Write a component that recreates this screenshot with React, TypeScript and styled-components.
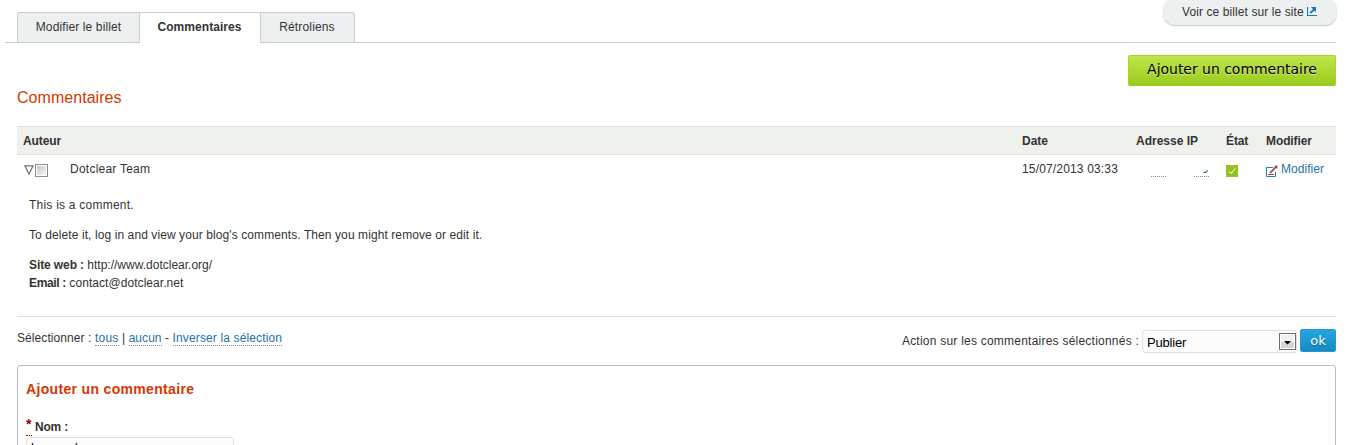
import React from "react";
import styled, { createGlobalStyle } from "styled-components";

const Global = createGlobalStyle`
  html, body { margin: 0; height: 445px; overflow: hidden; background: #fff; }
  * { box-sizing: border-box; }
  body { font: 12px/18px "Liberation Sans", Arial, sans-serif; color: #333; }
`;

const Page = styled.div`
  width: 1347px;
  height: 445px;
  padding: 0 11px 0 5px;
  overflow: hidden;
`;
const T = styled.span<{ $ls?: number }>`
  letter-spacing: ${(p) => p.$ls ?? 0}px;
  white-space: nowrap;
`;
const TopBar = styled.header`
  height: 43px;
  padding-left: 12px;
  display: flex;
  justify-content: space-between;
  border-bottom: 1px solid #ccc;
`;
const Tabs = styled.nav`
  display: flex;
  margin-top: 12px;
`;
const Tab = styled.a<{ $active?: boolean; $w: number }>`
  width: ${(p) => p.$w}px;
  height: ${(p) => (p.$active ? 31 : 30)}px;
  padding: 5px 1px 0 0;
  text-align: center;
  border: 1px solid #ccc;
  border-bottom: 0;
  margin-right: -1px;
  background: ${(p) => (p.$active ? "#fff" : "#ecf0f1")};
  font-weight: ${(p) => (p.$active ? "bold" : "normal")};
  &:first-child { border-top-left-radius: 3px; padding-right: 0; }
  &:last-child { border-top-right-radius: 3px; }
`;
const ViewLink = styled.a`
  width: 174px;
  height: 27px;
  margin: -2px -1px 0 0;
  padding: 5px 0 0 19px;
  display: flex;
  gap: 3px;
  border-radius: 12px;
  background: #ecf0f1;
  box-shadow: 0 1px 1px #c8c8c8;
  svg { margin-top: 4px; }
`;
const Content = styled.main`
  padding-left: 12px;
`;
const AddRow = styled.div`
  display: flex;
  justify-content: flex-end;
  padding-top: 12px;
`;
const AddButton = styled.button`
  width: 208px;
  height: 31px;
  padding: 0 0 4px;
  border: 1px solid #a5d52c;
  border-bottom-color: #9bca1c;
  border-radius: 2px;
  background: linear-gradient(#bee74b, #9bca1c);
  font: 14px/18px "DejaVu Sans", sans-serif;
  color: #000;
  text-shadow: 0 1px 1px rgba(255, 255, 255, 0.6);
`;
const Title = styled.h3`
  margin: 1px 0 17px;
  height: 22px;
  font: 16px/22px "Liberation Sans", Arial, sans-serif;
  color: #d33800;
`;
const Row = styled.div<{ $head?: boolean }>`
  display: grid;
  grid-template-columns: 999px 114px 90px 40px 1fr;
  height: 29px;
  padding: 5px 0 0 6px;
  ${(p) => p.$head && "background: #eff1ec; border: solid #dfdfdf; border-width: 1px 0; font-weight: bold;"}
`;
const Cell = styled.div`
  display: flex;
`;
const Author = styled(Cell)`
  svg { margin: 5px 1px 0 1px; }
`;
const Check = styled.span`
  width: 13px;
  height: 13px;
  margin: 4px 22px 0 0;
  border: 1px solid #8e8f8f;
  background: linear-gradient(135deg, #c4c8ce, #f6f6f6) content-box;
  padding: 1px;
`;
const Masked = styled.div`
  display: flex;
  padding-left: 15px;
  height: 18px;
`;
const Dots = styled.i`
  width: 15px;
  height: 17px;
  margin-right: 28px;
  border-bottom: 1px dotted #888;
`;
const DotsEnd = styled(Dots)`
  display: flex;
  justify-content: flex-end;
  margin: 0;
  svg { margin-top: 5px; }
`;
const State = styled(Cell)`
  svg { margin-top: 5px; }
`;
const Edit = styled(Cell)`
  gap: 3px;
  color: #2373a8;
  svg { margin-top: 5px; }
`;
const Detail = styled.section`
  height: 133px;
  padding: 12px 0 0 12px;
  border-bottom: 1px solid #dfdfdf;
  p { margin: 0 0 12px; }
`;
const Actions = styled.div`
  display: flex;
  justify-content: space-between;
  height: 48px;
  padding-top: 12px;
`;
const Link = styled.a<{ $ls?: number }>`
  display: inline-block;
  height: 17px;
  letter-spacing: ${(p) => p.$ls ?? 0.1}px;
  color: #2373a8;
  border-bottom: 1px dotted #888;
`;
const Apply = styled.div`
  display: flex;
  > span { margin: 3px 3px 0 0; }
`;
const Select = styled.div`
  width: 155px;
  height: 23px;
  margin: 1px 3px 0 0;
  display: flex;
  justify-content: space-between;
  padding: 2px 0 0 4px;
  border: 1px solid #dfdfdf;
  border-radius: 3px;
  background: #fcfcfc;
  color: #000;
  font-size: 13px;
  line-height: 19px;
`;
const Ok = styled.button`
  width: 36px;
  height: 23px;
  padding: 0;
  border: 1px solid #1f9bd8;
  border-radius: 2px;
  background: linear-gradient(#25a6e1, #188bc0);
  color: #fff;
  font: 13px/18px "DejaVu Sans", sans-serif;
  text-shadow: 0 1px 1px #14638a;
`;
const Fieldset = styled.section`
  height: 90px;
  padding: 14px 8px 0;
  border: 1px solid #bbb;
  border-radius: 3px;
`;
const Legend = styled.h4`
  margin: 0 0 20px;
  font-size: 14px;
  line-height: 18px;
  color: #d33800;
`;
const Label = styled.div`
  display: flex;
  gap: 3px;
  height: 19px;
  font-weight: bold;
`;
const Required = styled.abbr`
  width: 6px;
  height: 18px;
  border-bottom: 1px dotted #900;
  color: #900;
  font-size: 14px;
  line-height: 13px;
`;
const Input = styled.div`
  width: 208px;
  height: 24px;
  padding: 1px 4px;
  border: 1px solid #dfdfdf;
  border-radius: 3px;
  background: #fcfcfc;
  color: #000;
  font-size: 13px;
  line-height: 18px;
`;

export default function App() {
  return (
    <>
      <Global />
      <Page>
        <TopBar>
          <Tabs>
            <Tab $w={123}><T $ls={0.12}>Modifier le billet</T></Tab>
            <Tab $w={122} $active><T $ls={0.05}>Commentaires</T></Tab>
            <Tab $w={95}><T $ls={0.15}>Rétroliens</T></Tab>
          </Tabs>
          <ViewLink>
            <T $ls={0.09}>Voir ce billet sur le site</T>
            <svg width="10" height="10" fill="none" stroke="#1c78a6">
              <path d="M.5 0V8.5H10" strokeWidth="1.2" />
              <path d="M3.3 6.2L7.5 2" strokeWidth="1.8" />
              <path d="M4 0H9V5.2z" fill="#1c78a6" stroke="none" />
            </svg>
          </ViewLink>
        </TopBar>
        <Content>
          <AddRow><AddButton><T $ls={-0.03}>Ajouter un commentaire</T></AddButton></AddRow>
          <Title><T $ls={0.04}>Commentaires</T></Title>
          <Row $head>
            <Cell><T $ls={-0.1}>Auteur</T></Cell>
            <Cell><T>Date</T></Cell>
            <Cell><T>Adresse IP</T></Cell>
            <Cell><T $ls={-0.1}>État</T></Cell>
            <Cell><T $ls={-0.1}>Modifier</T></Cell>
          </Row>
          <Row>
            <Author>
              <svg width="10" height="10" fill="none" stroke="#777" strokeWidth="1.3"><path d="M.9 .8H9.1L5 9z" /></svg>
              <Check />
              <T $ls={0.24}>Dotclear Team</T>
            </Author>
            <Cell><T $ls={0.16}>15/07/2013 03:33</T></Cell>
            <Masked>
              <Dots />
              <DotsEnd>
                <svg width="6" height="9" fill="none" stroke="#2373a8" strokeWidth="1.2"><path d="M.5 7.4H3L4.6 5.4" /></svg>
              </DotsEnd>
            </Masked>
            <State>
              <svg width="12" height="12">
                <rect width="12" height="12" fill="#95c11f" />
                <path d="M3 6.2L5.2 8.6L9.2 3.4" fill="none" stroke="#fff" />
              </svg>
            </State>
            <Edit>
              <svg width="12" height="12" fill="none">
                <path d="M7 2.5H.5V11.5H9.5V7" stroke="#2080b0" />
                <path d="M2 9.5H8" stroke="#c33" />
                <path d="M4 8L9 3" stroke="#777" strokeWidth="2" />
                <path d="M9 3L11 1" stroke="#c9304c" strokeWidth="2.5" />
              </svg>
              <T $ls={0.05}>Modifier</T>
            </Edit>
          </Row>
          <Detail>
            <p><T $ls={0.23}>This is a comment.</T></p>
            <p><T $ls={0.09}>To delete it, log in and view your blog's comments. Then you might remove or edit it.</T></p>
            <div><T $ls={-0.1}><b>Site web :</b></T><T> http://www.dotclear.org/</T></div>
            <div><T $ls={-0.34}><b>Email :</b></T><T $ls={0.06}> contact@dotclear.net</T></div>
          </Detail>
          <Actions>
            <T $ls={0.08}>Sélectionner : <Link $ls={0.25}>tous</Link> | <Link $ls={0.05}>aucun</Link> - <Link $ls={0.14}>Inverser la sélection</Link></T>
            <Apply>
              <T $ls={0.23}>Action sur les commentaires sélectionnés :</T>
              <Select>
                <T $ls={-0.2}>Publier</T>
                <svg width="17" height="17">
                  <rect x=".5" y=".5" width="16" height="16" fill="#fff" stroke="#707070" />
                  <rect x="2" y="2" width="13" height="7" fill="#f0f0f0" />
                  <rect x="2" y="9" width="13" height="6" fill="#d6d6d6" />
                  <path d="M5 8H12L8.5 11.5z" fill="#000" />
                </svg>
              </Select>
              <Ok>ok</Ok>
            </Apply>
          </Actions>
          <Fieldset>
            <Legend><T $ls={0.33}>Ajouter un commentaire</T></Legend>
            <Label><Required>*</Required><T $ls={-0.2}>Nom :</T></Label>
            <Input><T $ls={0.3}>bernard</T></Input>
          </Fieldset>
        </Content>
      </Page>
    </>
  );
}
